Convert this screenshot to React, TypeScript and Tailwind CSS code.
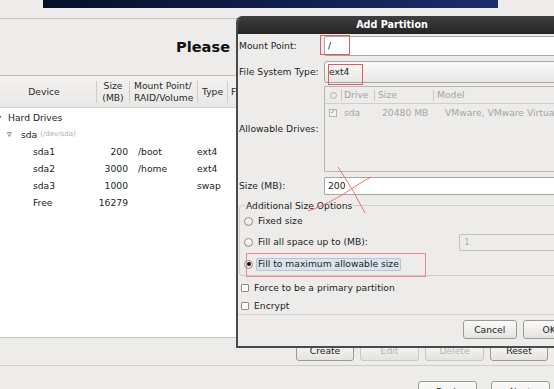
import React from "react";

const font = { fontFamily: '"DejaVu Sans", "Liberation Sans", sans-serif' };

function Btn({ label, disabled, className = "" }: { label: string; disabled?: boolean; className?: string }) {
  return (
    <div
      className={
        "flex items-center justify-center rounded-[3px] border bg-gradient-to-b from-[#fbfbfa] to-[#e4e3e1] text-[9.2px] " +
        (disabled ? "border-[#c9c7c3] text-[#b4b2ae]" : "border-[#9d9a96] text-[#1c1c1c]") +
        " " +
        className
      }
    >
      {label}
    </div>
  );
}

function Radio({ checked }: { checked?: boolean }) {
  return (
    <span className="flex h-[9px] w-[9px] items-center justify-center rounded-full border border-[#8f8c88] bg-gradient-to-b from-white to-[#e6e5e3]">
      {checked && <span className="h-[4px] w-[4px] rounded-full bg-[#111]" />}
    </span>
  );
}

function Check() {
  return <span className="h-[8px] w-[8px] rounded-[1px] border border-[#8f8c88] bg-white" />;
}

const rows = [
  { name: "sda1", size: "200", mount: "/boot", type: "ext4" },
  { name: "sda2", size: "3000", mount: "/home", type: "ext4" },
  { name: "sda3", size: "1000", mount: "", type: "swap" },
  { name: "Free", size: "16279", mount: "", type: "" },
];

export default function App() {
  return (
    <div style={font} className="relative h-[389px] w-[554px] overflow-hidden bg-[#edeceb] text-[9.2px] text-[#1c1c1c]">
      {/* top banner */}
      <div className="h-[19px] border-b border-[#c4c2be]">
        <div className="ml-[43px] h-[8px] w-[455px] bg-gradient-to-r from-[#07102a] via-[#0f1d4a] to-[#1b2f6e]" />
      </div>

      {/* heading */}
      <div className="flex h-[57px] items-center border-b border-[#bebcb8] pl-[176px]">
        <span className="text-[14.6px] font-bold text-[#111]">Please</span>
      </div>

      {/* tree view */}
      <div className="h-[262px] border-b border-[#c6c4c0] bg-white">
        <div className="flex h-[32px] items-center border-b border-[#d3d1cd] bg-gradient-to-b from-[#f3f2f1] to-[#e9e8e6] text-[#2a2a2a]">
          <div className="w-[96px] pr-[8px] text-center">Device</div>
          <div className="h-[22px] w-px bg-[#cfcdc9]" />
          <div className="w-[32px] text-center leading-[12px]">
            Size
            <br />
            (MB)
          </div>
          <div className="h-[22px] w-px bg-[#cfcdc9]" />
          <div className="w-[67px] pl-[4px] leading-[12px]">
            Mount Point/
            <br />
            RAID/Volume
          </div>
          <div className="h-[22px] w-px bg-[#cfcdc9]" />
          <div className="w-[29px] pl-[4px]">Type</div>
          <div className="h-[22px] w-px bg-[#cfcdc9]" />
          <div className="pl-[3px]">F</div>
        </div>
        <div className="pt-[1px]">
          <div className="relative flex h-[17px] items-center pl-[8px]">
            <span className="absolute -left-[3px] text-[8px] text-[#333]">▾</span>
            Hard Drives
          </div>
          <div className="flex h-[17px] items-center pl-[7px]">
            <span className="w-[14px] text-[9px] text-[#333]">▿</span>
            <span>sda</span>
            <span className="ml-[3px] text-[7px] text-[#b0aeaa]">(/dev/sda)</span>
          </div>
          {rows.map((r) => (
            <div key={r.name} className="flex h-[17px] items-center pl-[33px]">
              <span className="w-[60px]">{r.name}</span>
              <span className="w-[35px] text-right">{r.size}</span>
              <span className="w-[69px] pl-[10px]">{r.mount}</span>
              <span>{r.type}</span>
            </div>
          ))}
        </div>
      </div>

      {/* action buttons */}
      <div className="flex h-[28px] items-start gap-[6px] border-b border-[#cfcdc9] pl-[296px] pt-[2px]">
        <Btn label="Create" className="h-[21px] w-[58px]" />
        <Btn label="Edit" disabled className="h-[21px] w-[59px]" />
        <Btn label="Delete" disabled className="h-[21px] w-[59px]" />
        <Btn label="Reset" className="h-[21px] w-[58px]" />
      </div>

      {/* bottom buttons */}
      <div className="flex gap-[14px] pl-[418px] pt-[15px]">
        <Btn label="Back" className="h-[21px] w-[59px]" />
        <Btn label="Next" className="h-[21px] w-[59px] border-[#6f8fbf]" />
      </div>

      {/* Add Partition dialog */}
      <div className="absolute left-[236px] top-[16px] h-[332px] w-[340px] overflow-hidden rounded-tl-[6px] border-b-2 border-l-2 border-[#4a4a4a] bg-[#edeceb]">
        <div className="flex h-[18px] items-center justify-center bg-gradient-to-b from-[#404040] to-[#242424] pr-[30px] text-[9.6px] font-bold text-white">
          Add Partition
        </div>

        <div className="mt-[2px] flex h-[20px] items-center">
          <span className="w-[86px] pl-[1px]">Mount Point:</span>
          <div className="flex h-[20px] flex-1 items-center rounded-[2px] border border-[#a7a5a1] bg-white pl-[3px]">/</div>
        </div>

        <div className="mt-[5px] flex h-[22px] items-center">
          <span className="w-[86px] pl-[1px]">File System Type:</span>
          <div className="flex h-[22px] flex-1 items-center rounded-[3px] border border-[#a7a5a1] bg-gradient-to-b from-[#fafafa] to-[#e8e7e5] pl-[4px]">
            ext4
          </div>
        </div>

        <div className="mt-[3px] flex h-[86px] items-center">
          <span className="w-[86px] pl-[1px]">Allowable Drives:</span>
          <div className="h-[86px] flex-1 border border-[#b9b7b3] text-[#a6a4a0]">
            <div className="flex h-[17px] items-center border-b border-[#d0cec9]">
              <span className="flex w-[16px] justify-center">
                <span className="h-[7px] w-[7px] rounded-full border border-[#b4b2ae]" />
              </span>
              <span className="h-[11px] w-px bg-[#c9c7c3]" />
              <span className="w-[32px] pl-[2px]">Drive</span>
              <span className="h-[11px] w-px bg-[#c9c7c3]" />
              <span className="w-[58px] pl-[3px]">Size</span>
              <span className="h-[11px] w-px bg-[#c9c7c3]" />
              <span className="pl-[3px]">Model</span>
            </div>
            <div className="flex h-[17px] items-center">
              <span className="flex w-[16px] justify-center">
                <span className="flex h-[8px] w-[8px] items-center justify-center border border-[#b4b2ae] bg-[#f4f4f3] text-[7px] leading-none text-[#9a9894]">
                  ✓
                </span>
              </span>
              <span className="w-[41px] pl-[3px]">sda</span>
              <span className="w-[63px]">20480 MB</span>
              <span className="whitespace-nowrap">VMware, VMware Virtual S</span>
            </div>
          </div>
        </div>

        <div className="mt-[5px] flex h-[18px] items-center">
          <span className="w-[86px] pl-[1px]">Size (MB):</span>
          <div className="flex h-[18px] flex-1 items-center rounded-[2px] border border-[#a7a5a1] bg-white pl-[3px]">200</div>
        </div>

        <fieldset className="ml-[1px] mt-[5px] rounded-[3px] border border-[#cfcdc9] pl-[4px]">
          <legend className="ml-[1px] px-[1px] leading-[11px]">Additional Size Options</legend>
          <div className="flex h-[20px] items-center gap-[5px]">
            <Radio />
            <span>Fixed size</span>
          </div>
          <div className="flex h-[22px] items-center gap-[5px]">
            <Radio />
            <span className="w-[196px]">Fill all space up to (MB):</span>
            <div className="flex h-[17px] flex-1 items-center rounded-[2px] border border-[#c3c1bd] pl-[4px] text-[#b3b1ad]">1</div>
          </div>
          <div className="flex h-[22px] items-center gap-[3px]">
            <Radio checked />
            <span className="flex h-[13px] items-center rounded-[2px] border border-[#b7c3d3] bg-[#dbe3ee] px-[1px]">
              Fill to maximum allowable size
            </span>
          </div>
        </fieldset>

        <div className="mt-[2px] flex h-[19px] items-center gap-[5px] pl-[3px]">
          <Check />
          <span>Force to be a primary partition</span>
        </div>
        <div className="flex h-[17px] items-center gap-[5px] pl-[3px]">
          <Check />
          <span>Encrypt</span>
        </div>

        <div className="flex gap-[6px] border-t border-[#d6d4d0] pl-[225px] pt-[5px]">
          <Btn label="Cancel" className="h-[19px] w-[59px]" />
          <Btn label="OK" className="h-[19px] w-[59px]" />
        </div>
      </div>

      {/* red annotations */}
      <div className="absolute left-[320px] top-[35px] h-[20px] w-[30px] border border-[#e25b5b]" />
      <div className="absolute left-[328px] top-[64px] h-[21px] w-[35px] border border-[#e25b5b]" />
      <div className="absolute left-[246px] top-[253px] h-[24px] w-[180px] border border-[#e8888a]" />
      <svg className="absolute left-0 top-0" width="554" height="389" fill="none">
        <path d="M338 167 L352 189 L365 213" stroke="#ef6f6f" strokeWidth="1" />
        <path d="M371 177 C358 184 350 190 342 195 C330 202 318 208 308 211" stroke="#ef6f6f" strokeWidth="1" />
      </svg>
    </div>
  );
}
